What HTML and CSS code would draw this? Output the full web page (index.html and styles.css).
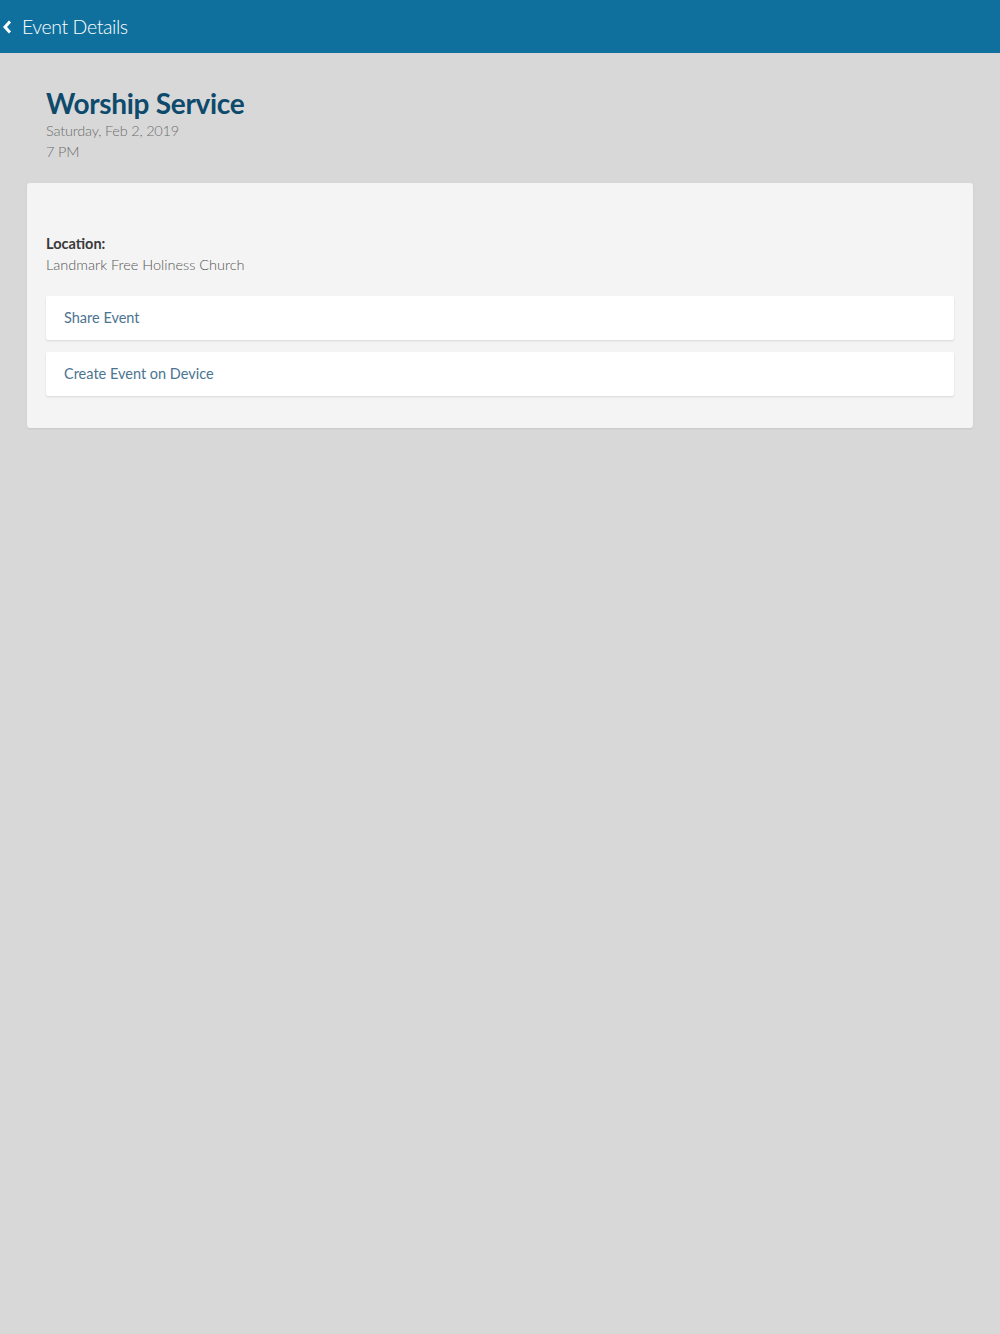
FILE: index.html
```html
<!DOCTYPE html>
<html lang="en">
<head>
    <meta charset="UTF-8">
    <meta name="viewport" content="width=device-width, initial-scale=1.0">
    <title>Event Details</title>
    <link rel="stylesheet" href="styles.css">
</head>
<body>
    <div class="navbar">
        <a class="back" href="#">
            <svg width="10" height="14" viewBox="0 0 10 14"><path d="M8 1.5 L3 7 L8 12.5" fill="none" stroke="#fff" stroke-width="3"/></svg>
        </a>
        <span class="navbar-title">Event Details</span>
    </div>

    <div class="content">
        <div class="event-header">
            <h1>Worship Service</h1>
            <div class="event-date">Saturday, Feb 2, 2019</div>
            <div class="event-time">7 PM</div>
        </div>

        <div class="event-card">
            <div class="event-description"></div>
            <div class="location">
                <div class="location-label">Location:</div>
                <div class="location-value">Landmark Free Holiness Church</div>
            </div>
            <a class="action-button" href="#">Share Event</a>
            <a class="action-button" href="#">Create Event on Device</a>
        </div>
    </div>
</body>
</html>
```

FILE: styles.css
```css
body {
    font-family: Lato, 'Open Sans', sans-serif;
    margin: 0;
    padding: 0;
    background-color: #d8d8d8;
    min-height: 100vh;
}

.navbar {
    background-color: #10709d;
    color: #fff;
    height: 53px;
    display: flex;
    align-items: center;
}

.navbar .back {
    display: flex;
    align-items: center;
    padding: 0 10px 0 2px;
}

.navbar-title {
    font-size: 19.5px;
    font-weight: 300;
    letter-spacing: -0.4px;
}

.content {
    padding: 0 27px;
}

.event-header {
    padding: 34px 19px 21px;
}

.event-header h1 {
    margin: 0;
    font-size: 28px;
    font-weight: 700;
    color: #0d4a6c;
    line-height: 33px;
    letter-spacing: -0.3px;
}

.event-date, .event-time {
    font-size: 14.5px;
    font-weight: 300;
    color: #6e6e6e;
    line-height: 21px;
    letter-spacing: -0.2px;
}

.event-card {
    background-color: #f4f4f4;
    border-radius: 3px;
    box-shadow: 0 1px 2px rgba(0, 0, 0, 0.08);
    padding: 0 19px 32px;
}

.event-description {
    height: 50px;
}

.location {
    margin-bottom: 21px;
}

.location-label {
    font-size: 14.5px;
    font-weight: 700;
    color: #3a3a3a;
    line-height: 21px;
}

.location-value {
    font-size: 14.5px;
    font-weight: 300;
    color: #555;
    line-height: 21px;
}

.action-button {
    display: block;
    background-color: #fff;
    height: 44px;
    line-height: 44px;
    padding: 0 18px;
    margin-bottom: 12px;
    font-size: 14.5px;
    color: #4b7490;
    text-decoration: none;
    border-radius: 2px;
    box-shadow: 0 1px 2px rgba(0, 0, 0, 0.12);
}

.action-button:last-child {
    margin-bottom: 0;
}
```
